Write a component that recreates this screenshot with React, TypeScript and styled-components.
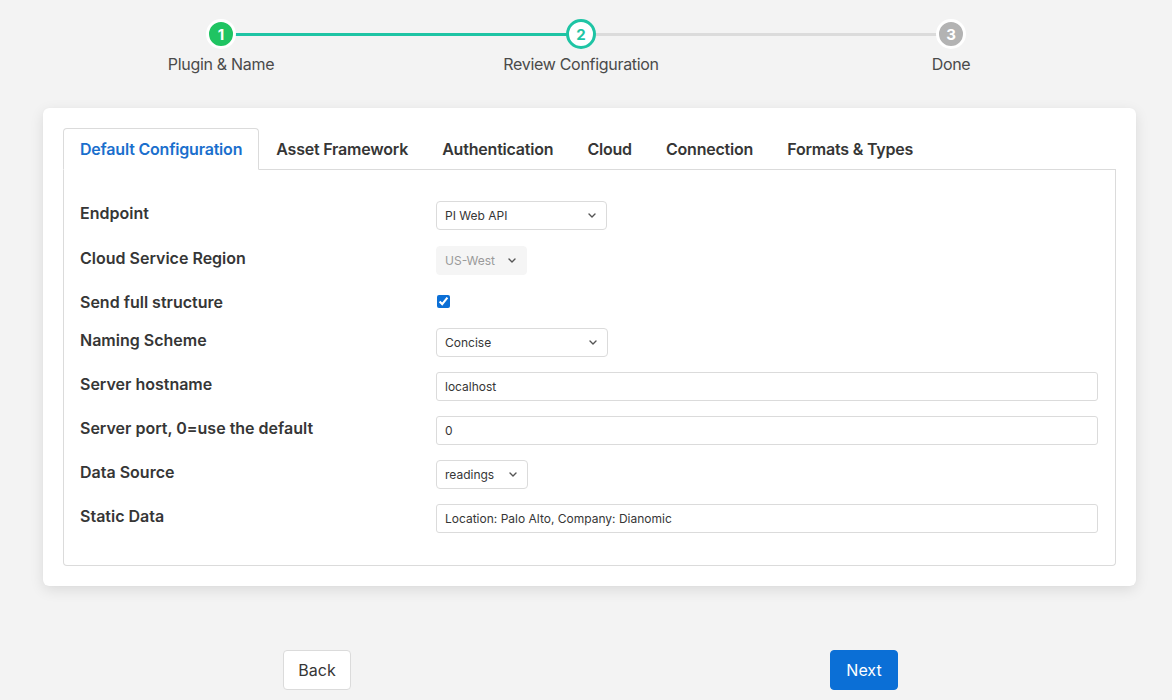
import React from 'react';
import styled, {createGlobalStyle} from 'styled-components';

const GlobalStyle = createGlobalStyle`
    html, body {
        margin: 0;
        padding: 0;
        background: #f3f3f3;
        font-family: Inter, "Noto Sans", "Liberation Sans", sans-serif;
        color: #363636;
    }
`;

type StepState = 'done' | 'current' | 'todo';

const steps: {label: string; state: StepState}[] = [
    {label: 'Plugin & Name', state: 'done'},
    {label: 'Review Configuration', state: 'current'},
    {label: 'Done', state: 'todo'},
];

const tabs = ['Default Configuration', 'Asset Framework', 'Authentication', 'Cloud', 'Connection', 'Formats & Types'];

function Chevron() {
    return (
        <svg width="8" height="5" viewBox="0 0 8 5">
            <polyline points="1,1 4,4 7,1" fill="none" stroke="#555" strokeWidth="1.4" strokeLinecap="round" strokeLinejoin="round"/>
        </svg>
    );
}

function Dropdown({value, width, disabled}: {value: string; width: number; disabled?: boolean}) {
    return (
        <SelectWrap $width={width}>
            <Select disabled={disabled} defaultValue={value}>
                <option>{value}</option>
            </Select>
            <ChevronBox><Chevron/></ChevronBox>
        </SelectWrap>
    );
}

export default function App() {
    return (
        <Page>
            <GlobalStyle/>
            <Steps>
                <StepTrack>
                    <Circle $state="done">1</Circle>
                    <Connector $active/>
                    <Circle $state="current">2</Circle>
                    <Connector/>
                    <Circle $state="todo">3</Circle>
                </StepTrack>
                <StepLabels>
                    {steps.map((step, index) =>
                        <StepLabel key={index}><span>{step.label}</span></StepLabel>
                    )}
                </StepLabels>
            </Steps>

            <Card>
                <TabBar>
                    {tabs.map((tab, index) =>
                        <Tab key={index} $active={index === 0}>{tab}</Tab>
                    )}
                </TabBar>
                <TabPanel>
                    <Row $first>
                        <Label>Endpoint</Label>
                        <Dropdown value="PI Web API" width={171}/>
                    </Row>
                    <Row>
                        <Label>Cloud Service Region</Label>
                        <Dropdown value="US-West" width={91} disabled/>
                    </Row>
                    <Row $compact>
                        <Label>Send full structure</Label>
                        <Check type="checkbox" defaultChecked/>
                    </Row>
                    <Row>
                        <Label>Naming Scheme</Label>
                        <Dropdown value="Concise" width={172}/>
                    </Row>
                    <Row>
                        <Label>Server hostname</Label>
                        <TextInput defaultValue="localhost"/>
                    </Row>
                    <Row>
                        <Label>Server port, 0=use the default</Label>
                        <TextInput defaultValue="0"/>
                    </Row>
                    <Row>
                        <Label>Data Source</Label>
                        <Dropdown value="readings" width={92}/>
                    </Row>
                    <Row>
                        <Label>Static Data</Label>
                        <TextInput defaultValue="Location: Palo Alto, Company: Dianomic"/>
                    </Row>
                </TabPanel>
            </Card>

            <Actions>
                <Button>Back</Button>
                <Button $primary>Next</Button>
            </Actions>
        </Page>
    );
}

const Page = styled.div`
    padding-top: 19px;
    min-height: 700px;
    box-sizing: border-box;
`;

const Steps = styled.div`
    margin-left: 206px;
    width: 760px;
`;

const StepTrack = styled.div`
    display: grid;
    grid-template-columns: 30px 330px 30px 340px 30px;
    align-items: center;
`;

const Circle = styled.div<{$state: StepState}>`
    width: 30px;
    height: 30px;
    box-sizing: border-box;
    border-radius: 50%;
    display: flex;
    align-items: center;
    justify-content: center;
    font-size: 15px;
    font-weight: 700;
    border: 3px solid ${p => p.$state === 'current' ? '#1ec4a4' : '#ffffff'};
    background: ${p => p.$state === 'done' ? '#1fc462' : p.$state === 'current' ? '#ffffff' : '#b3b3b3'};
    color: ${p => p.$state === 'current' ? '#1ec4a4' : '#ffffff'};
    position: relative;
    z-index: 1;
`;

const Connector = styled.div<{$active?: boolean}>`
    height: 3px;
    margin: 0 -2px;
    background: ${p => p.$active ? '#1ec4a4' : '#dbdbdb'};
`;

const StepLabels = styled.div`
    display: grid;
    grid-template-columns: 30px 330px 30px 340px 30px;
    margin-top: 3px;

    & > :nth-child(2) { grid-column: 3; }
    & > :nth-child(3) { grid-column: 5; }
`;

const StepLabel = styled.div`
    display: flex;
    justify-content: center;
    white-space: nowrap;
    font-size: 16px;
    line-height: 24px;
    letter-spacing: -0.3px;
    color: #4a4a4a;
`;

const Card = styled.div`
    margin: 32px 0 0 43px;
    width: 1093px;
    box-sizing: border-box;
    background: #ffffff;
    border-radius: 6px;
    box-shadow: 0 4px 14px rgba(0, 0, 0, 0.1), 0 0 1px rgba(0, 0, 0, 0.06);
    padding: 20px 20px 20px;
`;

const TabBar = styled.div`
    display: flex;
    border-bottom: 1px solid #dbdbdb;
`;

const Tab = styled.div<{$active?: boolean}>`
    padding: 8px 16px;
    font-size: 16px;
    line-height: 24px;
    font-weight: 600;
    letter-spacing: -0.2px;
    white-space: nowrap;
    margin-bottom: -1px;
    border: 1px solid ${p => p.$active ? '#dbdbdb' : 'transparent'};
    border-bottom-color: ${p => p.$active ? '#ffffff' : 'transparent'};
    border-radius: 4px 4px 0 0;
    background: ${p => p.$active ? '#ffffff' : 'transparent'};
    color: ${p => p.$active ? '#1a6fcd' : '#363636'};
`;

const TabPanel = styled.div`
    border: 1px solid #dbdbdb;
    border-top: none;
    border-radius: 0 0 4px 4px;
    padding: 31px 17px 17px 16px;
    display: flex;
    flex-direction: column;
`;

const Row = styled.div<{$compact?: boolean; $first?: boolean}>`
    display: grid;
    grid-template-columns: 356px 1fr;
    align-items: start;
    margin-bottom: ${p => p.$first ? '16px' : '15px'};
    min-height: ${p => p.$compact ? '23px' : '29px'};
`;

const Label = styled.div`
    font-size: 16px;
    line-height: 22px;
    margin-top: 1px;
    font-weight: 600;
    color: #363636;
`;

const SelectWrap = styled.div<{$width: number}>`
    position: relative;
    width: ${p => p.$width}px;
    height: 29px;
`;

const Select = styled.select`
    appearance: none;
    -webkit-appearance: none;
    display: block;
    width: 100%;
    height: 29px;
    box-sizing: border-box;
    border: 1px solid #dbdbdb;
    border-radius: 4px;
    background: #ffffff;
    padding: 0 24px 0 8px;
    font-family: Inter, "Noto Sans", "Liberation Sans", sans-serif;
    font-size: 12px;
    color: #363636;
    outline: none;

    &:disabled {
        background: #f5f5f5;
        border-color: #f5f5f5;
        color: #9a9a9a;
        opacity: 1;
    }
`;

const ChevronBox = styled.span`
    position: absolute;
    right: 11px;
    top: 12px;
    display: flex;
    pointer-events: none;
`;

const Check = styled.input`
    margin: 5px 0 0 1px;
    width: 13px;
    height: 13px;
    accent-color: #0b6fd6;
`;

const TextInput = styled.input`
    display: block;
    width: 100%;
    height: 29px;
    box-sizing: border-box;
    border: 1px solid #dbdbdb;
    border-radius: 3px;
    padding: 0 8px;
    font-family: Inter, "Noto Sans", "Liberation Sans", sans-serif;
    font-size: 12px;
    color: #363636;
    outline: none;
`;

const Actions = styled.div`
    display: flex;
    gap: 479px;
    margin: 64px 0 0 283px;
`;

const Button = styled.button<{$primary?: boolean}>`
    width: 68px;
    height: 40px;
    box-sizing: border-box;
    border-radius: 4px;
    border: 1px solid ${p => p.$primary ? '#0b6fd6' : '#dbdbdb'};
    background: ${p => p.$primary ? '#0b6fd6' : '#ffffff'};
    color: ${p => p.$primary ? '#ffffff' : '#363636'};
    font-family: Inter, "Noto Sans", "Liberation Sans", sans-serif;
    font-size: 16px;
    padding: 0;
`;
